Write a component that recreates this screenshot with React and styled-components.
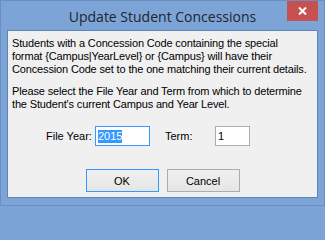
import React from 'react';
import styled, { createGlobalStyle } from 'styled-components';

const GlobalStyle = createGlobalStyle`
	html, body {
		margin: 0;
		padding: 0;
		background: #7ba3d5;
	}
	* {
		box-sizing: border-box;
	}
`;

const Window = styled.div`
	position: relative;
	width: 325px;
	height: 206px;
	display: flex;
	flex-direction: column;
	background: #7ca4d6;
	border: 1px solid #6a8ec2;
	padding: 0 6px 7px 6px;
	font-family: 'Liberation Sans', Arial, sans-serif;
	font-size: 11px;
	color: #000;
`;

const TitleBar = styled.div`
	height: 29px;
	display: flex;
	align-items: center;
	justify-content: center;
`;

const Title = styled.div`
	font-family: 'Open Sans', 'Noto Sans', sans-serif;
	font-size: 14px;
	color: #1f2530;
	margin-top: 1px;
`;

const CloseButton = styled.div`
	position: absolute;
	top: 0;
	right: 6px;
	width: 31px;
	height: 20px;
	background: #c75050;
	display: flex;
	align-items: center;
	justify-content: center;
`;

const Content = styled.div`
	flex: 1;
	background: #f0f0f0;
	border: 1px solid #5f84b8;
	padding: 6px 4px 5px 4px;
	display: flex;
	flex-direction: column;
`;

const Paragraph = styled.p`
	margin: 0 0 ${(p) => p.gap || 0}px 0;
	line-height: 13px;
	white-space: nowrap;
	letter-spacing: -0.15px;
`;

const FieldRow = styled.div`
	display: flex;
	align-items: center;
	margin-top: 15px;
	padding-left: 34px;
`;

const FieldLabel = styled.span`
	width: ${(p) => p.width}px;
	margin-left: ${(p) => p.offset || 0}px;
`;

const TextBox = styled.div`
	width: ${(p) => p.width}px;
	height: 20px;
	background: #fff;
	border: 1px solid ${(p) => (p.focused ? '#3399ff' : '#abadb3')};
	padding: 0 2px;
	display: flex;
	align-items: center;
`;

const Selected = styled.span`
	background: #3399ff;
	color: #fff;
	line-height: 13px;
`;

const ButtonRow = styled.div`
	display: flex;
	justify-content: center;
	gap: 8px;
	margin-top: auto;
`;

const Button = styled.div`
	width: 73px;
	height: 23px;
	display: flex;
	align-items: center;
	justify-content: center;
	background: linear-gradient(#f0f0f0, #e5e5e5);
	border: 1px solid ${(p) => (p.primary ? '#3399ff' : '#acacac')};
`;

const App = () => {
	return (
		<>
			<GlobalStyle />
			<Window>
				<TitleBar>
					<Title>Update Student Concessions</Title>
				</TitleBar>
				<CloseButton>
					<svg width="9" height="8" viewBox="0 0 9 8">
						<path d="M1 0.5 L8 7.5 M8 0.5 L1 7.5" stroke="#fff" strokeWidth="2" />
					</svg>
				</CloseButton>
				<Content>
					<Paragraph gap={9}>
						Students with a Concession Code containing the special
						<br />
						format {'{Campus|YearLevel}'} or {'{Campus}'} will have their
						<br />
						Concession Code set to the one matching their current details.
					</Paragraph>
					<Paragraph>
						Please select the File Year and Term from which to determine
						<br />
						the Student's current Campus and Year Level.
					</Paragraph>
					<FieldRow>
						<FieldLabel width={49}>File Year:</FieldLabel>
						<TextBox width={55} focused>
							<Selected>2015</Selected>
						</TextBox>
						<FieldLabel width={50} offset={15}>Term:</FieldLabel>
						<TextBox width={35}>1</TextBox>
					</FieldRow>
					<ButtonRow>
						<Button primary>OK</Button>
						<Button>Cancel</Button>
					</ButtonRow>
				</Content>
			</Window>
		</>
	);
};

export default App;
